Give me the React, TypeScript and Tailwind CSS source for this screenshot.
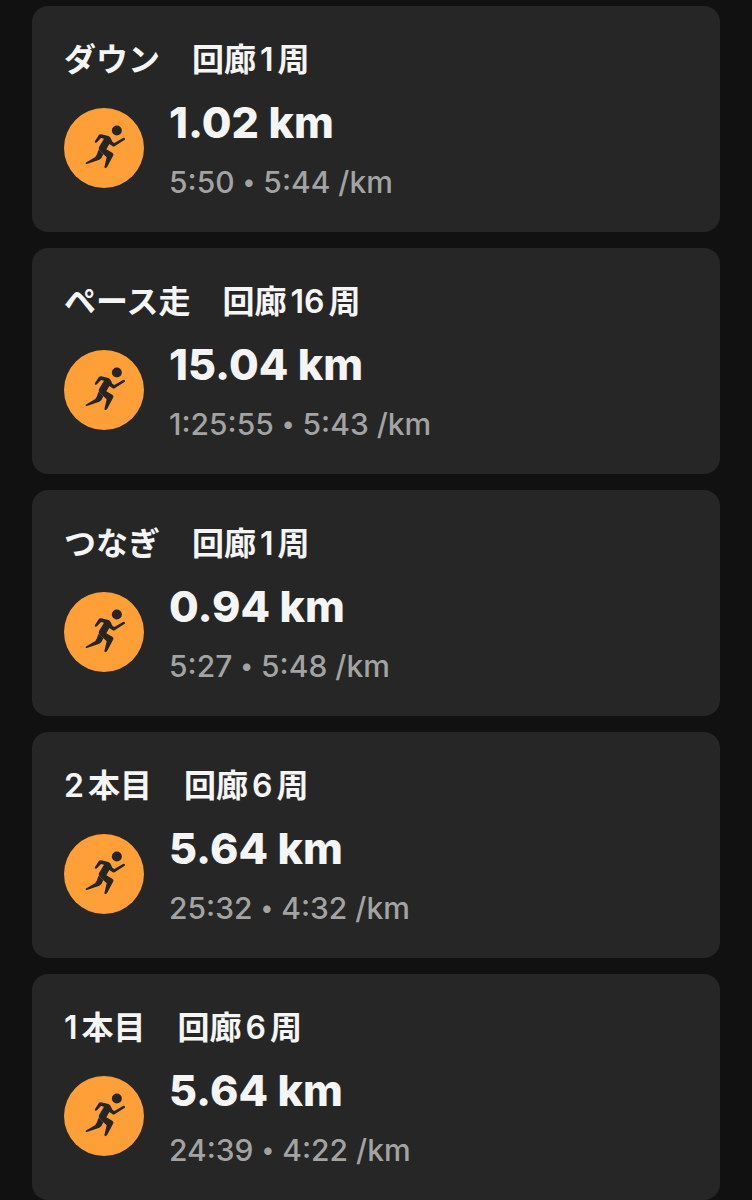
type Lap = {
  id: number;
  title: string;
  distance: string;
  time: string;
  pace: string;
};

const laps: Lap[] = [
  { id: 5, title: "ダウン　回廊1周", distance: "1.02 km", time: "5:50", pace: "5:44 /km" },
  { id: 4, title: "ペース走　回廊16周", distance: "15.04 km", time: "1:25:55", pace: "5:43 /km" },
  { id: 3, title: "つなぎ　回廊1周", distance: "0.94 km", time: "5:27", pace: "5:48 /km" },
  { id: 2, title: "2本目　回廊6周", distance: "5.64 km", time: "25:32", pace: "4:32 /km" },
  { id: 1, title: "1本目　回廊6周", distance: "5.64 km", time: "24:39", pace: "4:22 /km" },
];

function RunnerIcon() {
  return (
    <svg viewBox="0 0 240 240" className="size-20 shrink-0" aria-hidden="true">
      <circle cx="120" cy="120" r="120" fill="#ff9f38" />
      <g transform="translate(48 36)" fill="#262522">
        <circle cx="110.500" cy="31.500" r="15" />
        <path d="M46 68 Q43 66 45 63 L56 46 Q59 42 64 43 L85 48 Q91 50 93 56 L97 65 L103 69 L129 54 Q134 52 135 56 Q136 58 132 61 L105 78 Q101 81 97 78 L88 72 L79 88 L97 98 Q102 101 100 106 L81 142 Q76 147 73 142 L80 112 L59 92 Q54 87 57 81 L72 56 L63 54 L51 67 Q49 69 46 68 Z" />
        <path d="M58 91 L70 103 Q66 115 58 119 L21 132 Q16 133 17 128 L46 111 Q52 104 54 93 Q56 89 58 91 Z" />
      </g>
    </svg>
  );
}

function LapCard({ lap }: { lap: Lap }) {
  return (
    <li className="flex flex-col gap-3 rounded-2xl bg-[#262626] px-8 pt-8 pb-[30px]">
      <h2 className="text-[32px] leading-[44px] font-semibold text-[#f5f5f5] [text-autospace:normal]">
        {lap.title}
      </h2>
      <div className="flex items-center gap-[25px]">
        <RunnerIcon />
        <div className="flex min-w-0 flex-col gap-3">
          <p className="text-[43px] leading-[56px] font-extrabold text-[#f5f5f5]">{lap.distance}</p>
          <p className="flex items-center gap-2 text-[30px] leading-10 font-medium text-[#a3a3a3]">
            <span>{lap.time}</span>
            <span className="text-2xl">•</span>
            <span>{lap.pace}</span>
          </p>
        </div>
      </div>
    </li>
  );
}

export default function App() {
  return (
    <main
      lang="ja"
      className="min-h-screen bg-[#111111] px-8 pt-1.5 font-['Inter','Noto_Sans_CJK_JP',sans-serif]"
    >
      <ul className="flex flex-col gap-4">
        {laps.map((lap) => (
          <LapCard key={lap.id} lap={lap} />
        ))}
      </ul>
    </main>
  );
}
